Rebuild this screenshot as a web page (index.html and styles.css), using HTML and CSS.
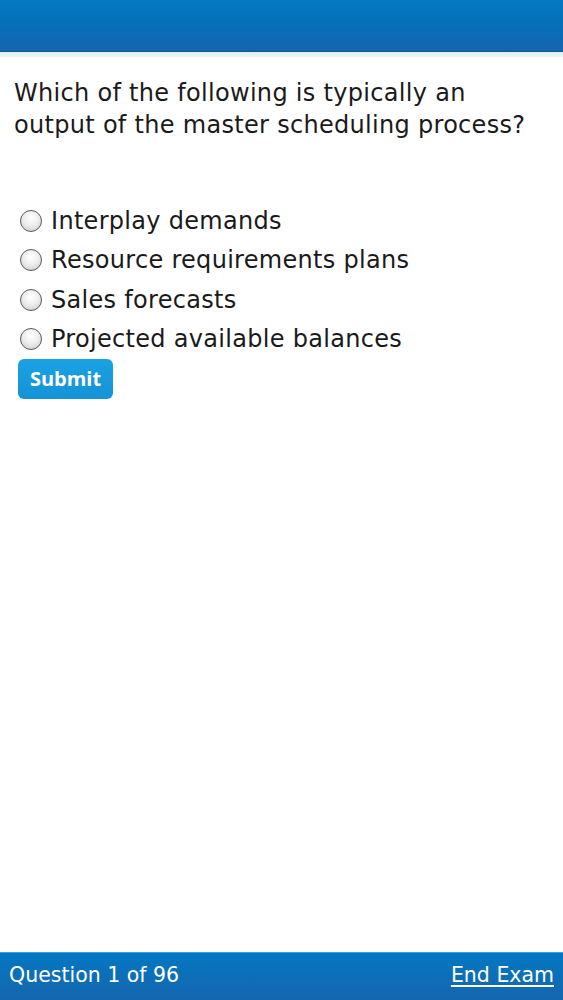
FILE: index.html
```html
<!DOCTYPE html>
<html>
<head>
<meta charset="utf-8">
<link rel="stylesheet" href="styles.css">
</head>
<body>
<div class="page">
  <header class="topbar"></header>
  <div class="topline"></div>
  <main class="content">
    <p class="question">Which of the following is typically an output of the master scheduling process?</p>
    <form class="options">
      <label class="option"><span class="radio"></span><span>Interplay demands</span></label>
      <label class="option"><span class="radio"></span><span>Resource requirements plans</span></label>
      <label class="option"><span class="radio"></span><span>Sales forecasts</span></label>
      <label class="option"><span class="radio"></span><span>Projected available balances</span></label>
      <div class="submit-row"><span class="submit">Submit</span></div>
    </form>
  </main>
  <footer class="footbar">
    <span class="count">Question 1 of 96</span>
    <a class="end" href="#">End Exam</a>
  </footer>
</div>
</body>
</html>
```

FILE: styles.css
```css
html, body {
  margin: 0;
  padding: 0;
  background: #ffffff;
}
.page {
  width: 563px;
  height: 1000px;
  display: flex;
  flex-direction: column;
  font-family: "DejaVu Sans", Verdana, sans-serif;
  color: #1a1a1a;
}
.topbar {
  height: 51px;
  background: linear-gradient(to bottom, #0479c3 0%, #0670b8 50%, #1565ae 100%);
  border-bottom: 1px solid #15588f;
}
.topline {
  height: 5px;
  background: linear-gradient(to bottom, #dcecf5, #f2f5f7);
}
.content {
  flex: 1;
  padding: 0 14px;
}
.question {
  margin: 20px 0 0 0;
  font-size: 24px;
  line-height: 32px;
  letter-spacing: 0.3px;
}
.options {
  margin-top: 60px;
  padding-left: 7px;
  display: flex;
  flex-direction: column;
}
.option {
  display: flex;
  align-items: center;
  height: 39.5px;
  font-size: 24px;
  letter-spacing: 0.3px;
}
.radio {
  width: 20px;
  height: 20px;
  border-radius: 50%;
  border: 1px solid #5a5a5a;
  background: radial-gradient(circle at 50% 35%, #ffffff 0%, #eeeeee 45%, #c8c8c8 100%);
  margin-left: -1px;
  margin-right: 9px;
  flex: none;
  box-sizing: content-box;
}
.submit {
  display: inline-block;
  margin-left: -3px;
  width: 95px;
  height: 40px;
  line-height: 40px;
  text-align: center;
  border-radius: 6px;
  background: linear-gradient(to bottom, #1ba2e2, #1592d6);
  color: #ffffff;
  font-family: "Open Sans", sans-serif;
  font-weight: 700;
  font-size: 20px;
}
.footbar {
  height: 48px;
  box-sizing: border-box;
  border-top: 1px solid #3aa0d8;
  background: linear-gradient(to bottom, #0477c2, #1566ae);
  display: flex;
  align-items: center;
  justify-content: space-between;
  padding: 0 9px 3px 9px;
  color: #ffffff;
  font-size: 20.5px;
}
.end {
  color: #ffffff;
  text-decoration: underline;
  text-underline-offset: 3px;
}
```
